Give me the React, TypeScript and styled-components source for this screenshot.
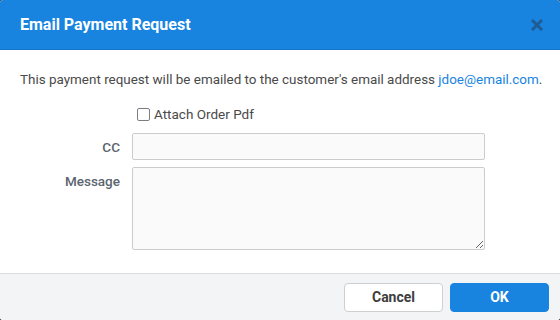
import React from "react"
import styled, { createGlobalStyle } from "styled-components"

const GlobalStyle = createGlobalStyle`
    html, body {
        margin: 0;
        padding: 0;
        background: #3a3a3a;
        font-family: Roboto, "Liberation Sans", Arial, sans-serif;
    }
    * {
        box-sizing: border-box;
    }
`

const Modal = styled.div`
    width: 560px;
    height: 320px;
    display: flex;
    flex-direction: column;
    background: #ffffff;
    border-radius: 3px;
    overflow: hidden;
`

const Header = styled.div`
    height: 50px;
    flex-shrink: 0;
    display: flex;
    align-items: center;
    justify-content: space-between;
    padding: 0 16px 0 20px;
    background: #1884e0;
    border-bottom: 1px solid #1677cc;
`

const Title = styled.h2`
    margin: 0;
    font-size: 16px;
    font-weight: 700;
    color: #ffffff;
`

const CloseButton = styled.button`
    border: 0;
    background: none;
    padding: 0;
    width: 14px;
    height: 14px;
    display: flex;
    align-items: center;
    justify-content: center;
    cursor: pointer;
`

const Body = styled.div`
    flex: 1;
    padding: 20px 20px 0;
    display: flex;
    flex-direction: column;
`

const Intro = styled.p`
    margin: 0 0 16px;
    font-size: 13.45px;
    line-height: 20px;
    color: #4a4a4a;
    white-space: nowrap;
`

const Link = styled.a`
    color: #1884e0;
    text-decoration: none;
`

const Form = styled.div`
    display: grid;
    grid-template-columns: 100px 353px;
    column-gap: 12px;
    row-gap: 7px;
    align-items: start;
`

const Label = styled.label<{ $top: number }>`
    font-size: 13.5px;
    font-weight: 500;
    color: #5b6470;
    text-align: right;
    padding-top: ${(p) => p.$top}px;
`

const CheckRow = styled.label`
    grid-column: 2;
    display: flex;
    align-items: center;
    gap: 4px;
    font-size: 13.5px;
    color: #4a4a4a;
    margin-left: 5px;
    margin-bottom: 4px;
    cursor: pointer;
`

const Box = styled.span`
    width: 13px;
    height: 13px;
    border: 1.5px solid #7a7d86;
    border-radius: 2px;
    background: #fff;
`

const Input = styled.input`
    height: 27px;
    width: 100%;
    border: 1px solid #cccccc;
    border-radius: 2px;
    background: #fafafa;
    font-family: inherit;
    font-size: 14px;
    padding: 0 8px;
    outline: none;
`

const TextArea = styled.textarea`
    height: 83px;
    width: 100%;
    border: 1px solid #cccccc;
    border-radius: 2px;
    background: #fafafa;
    font-family: inherit;
    font-size: 14px;
    padding: 6px 8px;
    outline: none;
    resize: vertical;
    display: block;
`

const Footer = styled.div`
    height: 47px;
    flex-shrink: 0;
    display: flex;
    justify-content: flex-end;
    align-items: center;
    gap: 7px;
    padding: 0 11px 0 0;
    background: #f3f4f6;
    border-top: 1px solid #dedede;
`

const Button = styled.button<{ $primary?: boolean }>`
    width: 99px;
    height: 29px;
    border-radius: 4px;
    font-family: inherit;
    font-size: 14px;
    font-weight: 700;
    cursor: pointer;
    border: 1px solid ${(p) => (p.$primary ? "#1884e0" : "#cfcfcf")};
    background: ${(p) => (p.$primary ? "#1884e0" : "#ffffff")};
    color: ${(p) => (p.$primary ? "#ffffff" : "#3d3d3d")};
`

export default function App() {
    return (
        <>
            <GlobalStyle />
            <Modal>
                <Header>
                    <Title>Email Payment Request</Title>
                    <CloseButton aria-label="Close">
                        <svg width="12" height="12" viewBox="0 0 12 12">
                            <path d="M2 2 L10 10 M10 2 L2 10" stroke="#1f5b94" strokeWidth="3" strokeLinecap="square" />
                        </svg>
                    </CloseButton>
                </Header>
                <Body>
                    <Intro>
                        This payment request will be emailed to the customer's email address{" "}
                        <Link href="#">jdoe@email.com</Link>.
                    </Intro>
                    <Form>
                        <CheckRow>
                            <Box />
                            Attach Order Pdf
                        </CheckRow>
                        <Label $top={6}>CC</Label>
                        <Input />
                        <Label $top={6}>Message</Label>
                        <TextArea />
                    </Form>
                </Body>
                <Footer>
                    <Button>Cancel</Button>
                    <Button $primary>OK</Button>
                </Footer>
            </Modal>
        </>
    )
}
